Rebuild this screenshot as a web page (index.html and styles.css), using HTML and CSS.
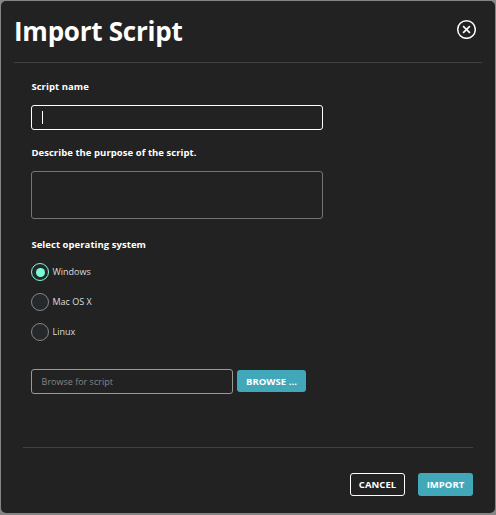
FILE: index.html
```html
<!DOCTYPE html>
<html lang="en">
<head>
<meta charset="utf-8">
<title>Import Script</title>
<link rel="stylesheet" href="styles.css">
</head>
<body>
<main class="dialog">
  <header class="dialog-header">
    <h1 class="title">Import Script</h1>
    <button class="close" type="button">
      <svg width="20" height="20" viewBox="0 0 20 20" fill="none" stroke="#fff">
        <circle cx="10.5" cy="10.5" r="8.8" stroke-width="1.5"/>
        <path d="M7.1 7.1l6.8 6.8M13.9 7.1l-6.8 6.8" stroke-width="1.6"/>
      </svg>
    </button>
  </header>
  <form class="form">
    <div class="label name-label">Script name</div>
    <div class="field name-field"><span class="caret"></span></div>
    <div class="label purpose-label">Describe the purpose of the script.</div>
    <div class="field purpose-field"></div>
    <div class="label os-label">Select operating system</div>
    <div class="options">
      <div class="option"><span class="radio checked"></span><span>Windows</span></div>
      <div class="option"><span class="radio"></span><span>Mac OS X</span></div>
      <div class="option"><span class="radio"></span><span>Linux</span></div>
    </div>
    <div class="file-row">
      <div class="field file-field"><span class="placeholder">Browse for script</span></div>
      <button class="button browse" type="button">BROWSE ...</button>
    </div>
  </form>
  <footer class="dialog-footer">
    <button class="button cancel" type="button">CANCEL</button>
    <button class="button import" type="button">IMPORT</button>
  </footer>
</main>
</body>
</html>
```
FILE: styles.css
```css
* {
  box-sizing: border-box;
}

body {
  margin: 0;
  padding: 1px 1px 2px;
  height: 515px;
  overflow: hidden;
  background: #858585;
  font-family: "Open Sans", sans-serif;
  color: #fff;
}

.dialog {
  display: flex;
  flex-direction: column;
  height: 512px;
  border-radius: 5px;
  background: #222;
}

.dialog-header {
  display: flex;
  justify-content: space-between;
  height: 62px;
  margin: 0 13px;
  padding: 12px 6px 0 0;
  border-bottom: 1px solid #424242;
}

.title {
  margin: 0;
  font-size: 26px;
  line-height: 36px;
  font-weight: 700;
  letter-spacing: -0.25px;
}

.close {
  width: 20px;
  height: 20px;
  margin-top: 6px;
  padding: 0;
  border: 0;
  background: none;
}

.close svg {
  display: block;
}

.form {
  flex: 1;
  padding: 16px 30px 0;
}

.label {
  height: 16px;
  padding-left: 0.4px;
  font-size: 9.5px;
  line-height: 16px;
  font-weight: 700;
  letter-spacing: 0.05px;
}

.field {
  display: flex;
  align-items: center;
  border: 1px solid #757575;
  border-radius: 3px;
}

.name-field {
  width: 292px;
  height: 25px;
  margin-top: 10px;
  padding-left: 10px;
  border-color: #fff;
}

.caret {
  width: 1px;
  height: 13px;
  background: #fff;
}

.purpose-label {
  margin-top: 15px;
}

.purpose-field {
  width: 292px;
  height: 48px;
  margin-top: 10px;
}

.os-label {
  margin-top: 18px;
}

.options {
  display: grid;
  gap: 12px;
  margin-top: 10px;
}

.option {
  display: flex;
  align-items: center;
  gap: 3.5px;
  height: 18px;
  font-size: 9px;
  line-height: 12px;
  color: #ddd;
}

.option span:last-child {
  padding-bottom: 1px;
}

.radio {
  display: flex;
  align-items: center;
  justify-content: center;
  width: 18px;
  height: 18px;
  border: 1px solid #858585;
  border-radius: 50%;
  background: #25292c;
}

.checked {
  border-color: #7dfbd6;
}

.checked::before {
  content: "";
  width: 9px;
  height: 9px;
  border-radius: 50%;
  background: #7dfbd6;
}

.file-row {
  display: flex;
  align-items: flex-start;
  gap: 4px;
  margin-top: 28px;
}

.file-field {
  width: 202px;
  height: 25px;
  padding-left: 9.6px;
  border-color: #999;
}

.placeholder {
  font-size: 9px;
  color: #858585;
}

.button {
  padding: 0;
  border: 0;
  border-radius: 3px;
  background: #40a8b9;
  color: #fff;
  font-family: inherit;
  font-size: 9.5px;
  font-weight: 700;
  letter-spacing: 0.05px;
}

.browse {
  width: 69px;
  height: 22px;
  margin-top: 1px;
}

.dialog-footer {
  display: flex;
  justify-content: flex-end;
  gap: 13px;
  height: 66px;
  margin: 0 22px;
  padding-top: 25px;
  border-top: 1px solid #424242;
}

.cancel,
.import {
  width: 55px;
  height: 23px;
}

.cancel {
  border: 1px solid #fff;
  background: #222;
}
```
